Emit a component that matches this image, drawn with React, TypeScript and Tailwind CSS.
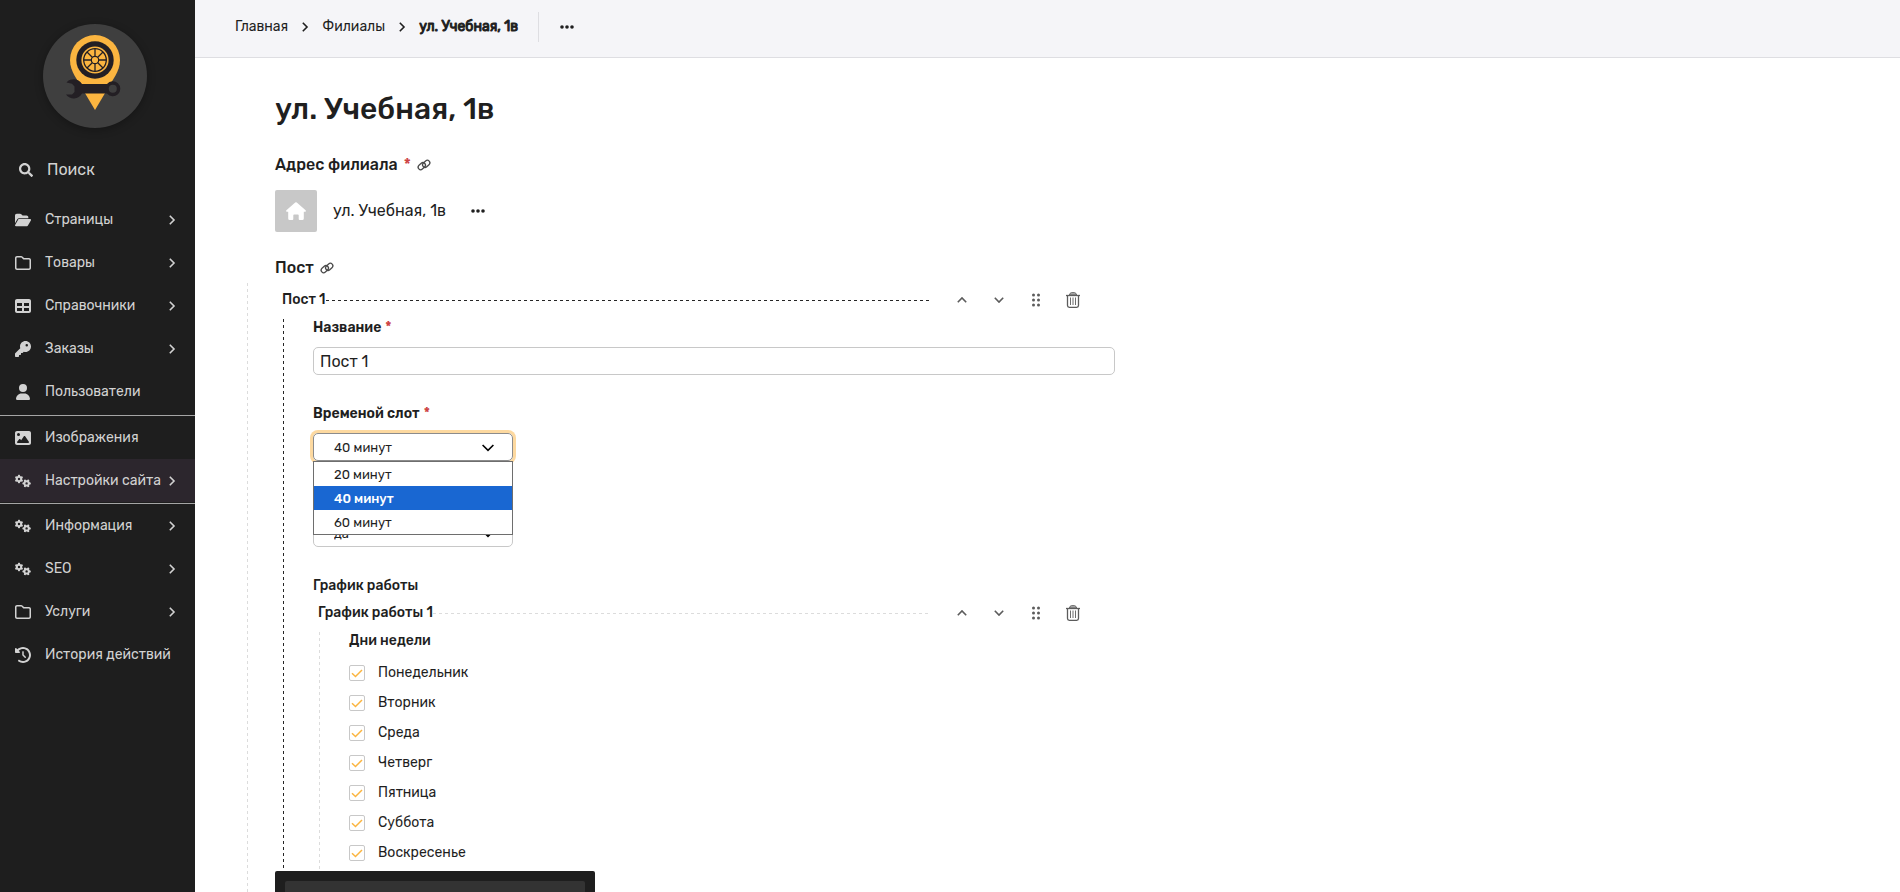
import { useState } from "react";
import type { ReactNode } from "react";
import {
  FaFolderOpen,
  FaRegFolder,
  FaTable,
  FaKey,
  FaUser,
  FaImage,
  FaGears,
  FaClockRotateLeft,
} from "react-icons/fa6";
import { FaSearch } from "react-icons/fa";

const groups = [
  [
    { label: "Страницы", icon: FaFolderOpen, arrow: true },
    { label: "Товары", icon: FaRegFolder, arrow: true },
    { label: "Справочники", icon: FaTable, arrow: true },
    { label: "Заказы", icon: FaKey, arrow: true },
    { label: "Пользователи", icon: FaUser, arrow: false },
  ],
  [
    { label: "Изображения", icon: FaImage, arrow: false },
    { label: "Настройки сайта", icon: FaGears, arrow: true, active: true },
  ],
  [
    { label: "Информация", icon: FaGears, arrow: true },
    { label: "SEO", icon: FaGears, arrow: true },
    { label: "Услуги", icon: FaRegFolder, arrow: true },
    { label: "История действий", icon: FaClockRotateLeft, arrow: false },
  ],
];

const days = [
  "Понедельник",
  "Вторник",
  "Среда",
  "Четверг",
  "Пятница",
  "Суббота",
  "Воскресенье",
];

const slots = ["20 минут", "40 минут", "60 минут"];

function Chevron({ className }: { className: string }) {
  return (
    <svg viewBox="0 0 10 10" className={className} fill="none" stroke="currentColor" strokeWidth="1.6">
      <path d="M2.8 .8 7 5 2.8 9.2" />
    </svg>
  );
}

function Logo() {
  return (
    <svg viewBox="0 0 104 104" className="size-[104px] rounded-full bg-[#3f3f3f] shadow-[0_2px_8px_rgba(0,0,0,0.3)]">
      <path d="M52 11a25 25 0 0 1 25 25c0 6-2 11-4.500 15.500L52 86 31.500 51.500C29 47 27 42 27 36a25 25 0 0 1 25-25z" fill="#fbb540" />
      <circle cx="52" cy="36" r="18.700" fill="#231f24" />
      <circle cx="52" cy="36" r="13.600" fill="#fbb540" />
      <circle cx="52" cy="36" r="11.300" fill="none" stroke="#231f24" strokeWidth="1.300" />
      <g stroke="#231f24" strokeWidth="1.300">
        <path d="M52 24.500v23M40.500 36h23M44 28l16 16M60 28 44 44" />
      </g>
      <circle cx="52" cy="36" r="3.700" fill="#fbb540" stroke="#231f24" strokeWidth="1.200" />
      <path
        d="M23.500 58.500a9.500 9.500 0 0 1 15.500 1.500H64a7.500 7.500 0 1 1 0 9.500H39A9.500 9.500 0 0 1 23 70.500h6l2.500-2.500v-5.500L29 59.800z"
        fill="#231f24"
      />
      <circle cx="69.800" cy="64.700" r="4" fill="#3f3f3f" />
    </svg>
  );
}

function Dots() {
  return (
    <svg viewBox="0 0 14 4" className="h-1 w-3.5" fill="currentColor">
      <circle cx="2" cy="2" r="1.800" />
      <circle cx="7" cy="2" r="1.800" />
      <circle cx="12" cy="2" r="1.800" />
    </svg>
  );
}

function LinkIcon() {
  return (
    <svg viewBox="0 0 14 12" className="h-3 w-3.5 text-[#4a4a4a]" fill="none" stroke="currentColor" strokeWidth="1.300">
      <rect x="-4" y="-2.500" width="8" height="5" rx="2.500" transform="translate(4.800 7.200) rotate(-42)" />
      <rect x="-4" y="-2.500" width="8" height="5" rx="2.500" transform="translate(9.200 4.800) rotate(-42)" />
    </svg>
  );
}

function Trash() {
  return (
    <svg viewBox="0 0 14 16" className="h-4 w-3.5" fill="none" stroke="currentColor">
      <path d="M0 3.500h14" strokeWidth="1.300" />
      <path d="M3.500 3c.3-1.500 1-2.300 2-2.300h3c1 0 1.700.8 2 2.300z" fill="currentColor" fillOpacity=".45" />
      <path d="M1.500 3.500v10q0 1.800 1.800 1.800h7.400q1.800 0 1.800-1.800v-10" strokeWidth="1.300" />
      <path d="M4.500 5.500v7.500M7 5.500v7.500M9.500 5.500v7.500" strokeWidth=".9" />
    </svg>
  );
}

function Label({ text, htmlFor, required }: { text: string; htmlFor?: string; required?: boolean }) {
  return (
    <label htmlFor={htmlFor} className="flex gap-1 pt-px text-sm leading-5 font-semibold">
      {text}
      {required && <span className="text-[#cd4444]">*</span>}
    </label>
  );
}

function BlockHeader({ title, dark }: { title: string; dark?: boolean }) {
  return (
    <div className="flex h-[34px] items-center pr-6">
      <h3 className="text-sm leading-5 font-medium">{title}</h3>
      <div
        className={
          dark
            ? "mr-3.5 h-px flex-1 bg-[repeating-linear-gradient(90deg,#262626_0_3px,transparent_3px_6px)]"
            : "mr-3.5 h-px flex-1 bg-[repeating-linear-gradient(90deg,#dcdcdc_0_3px,transparent_3px_6px)]"
        }
      />
      <div className="flex text-[#5c5c5c] *:flex *:h-6 *:w-[37px] *:items-center *:justify-center">
        <button type="button" aria-label="Вверх">
          <Chevron className="size-2.5 -rotate-90" />
        </button>
        <button type="button" aria-label="Вниз">
          <Chevron className="size-2.5 rotate-90" />
        </button>
        <button type="button" aria-label="Переместить">
          <svg viewBox="0 0 8 14" className="h-3.5 w-2" fill="currentColor">
            <circle cx="1.500" cy="2" r="1.500" />
            <circle cx="6.500" cy="2" r="1.500" />
            <circle cx="1.500" cy="7" r="1.500" />
            <circle cx="6.500" cy="7" r="1.500" />
            <circle cx="1.500" cy="12" r="1.500" />
            <circle cx="6.500" cy="12" r="1.500" />
          </svg>
        </button>
        <button type="button" aria-label="Удалить">
          <Trash />
        </button>
      </div>
    </div>
  );
}

function SelectArrow() {
  return (
    <svg viewBox="0 0 12 8" className="pointer-events-none absolute top-[11px] right-[19px] h-2 w-3" fill="none" stroke="#000" strokeWidth="1.600">
      <path d="M.6 1 6 6.400 11.400 1" />
    </svg>
  );
}

function Day({ name }: { name: string }) {
  const [checked, setChecked] = useState(true);
  return (
    <label className="flex h-[30px] items-center gap-[13px] text-sm">
      <span className="relative flex size-4">
        <input
          type="checkbox"
          checked={checked}
          onChange={(e) => setChecked(e.target.checked)}
          className="size-4 appearance-none rounded-xs border border-[#c8c8c8] bg-white"
        />
        {checked && (
          <svg viewBox="0 0 16 16" className="pointer-events-none absolute inset-0 size-4" fill="none" stroke="#fbb540" strokeWidth="1.500">
            <path d="M3 8.200 6.500 11.500 13 5" />
          </svg>
        )}
      </span>
      {name}
    </label>
  );
}

function Block({ children, dark }: { children: ReactNode; dark?: boolean }) {
  return (
    <div className="ml-px flex">
      <div
        className={
          dark
            ? "mt-0.5 w-px bg-[repeating-linear-gradient(180deg,#262626_0_3px,transparent_3px_6px)]"
            : "mt-0.5 w-px bg-[repeating-linear-gradient(180deg,#dcdcdc_0_3px,transparent_3px_6px)]"
        }
      />
      <div className="flex-1 pl-[29px]">{children}</div>
    </div>
  );
}

function Sidebar() {
  return (
    <aside className="w-[195px] shrink-0 bg-[#1e1e1e] text-[#d2d2d2]">
      <a href="#" aria-label="Главная" className="flex justify-center pt-6 pr-1.5">
        <Logo />
      </a>
      <button type="button" className="mt-[25px] flex h-[34px] w-full items-center gap-3.5 pl-[19px]">
        <FaSearch className="size-3.5" />
        <span className="text-base leading-6">Поиск</span>
      </button>
      <nav className="mt-[11px]">
        {groups.map((group, i) => (
          <ul key={i} className={i === 0 ? "pb-0.5" : "border-t border-[#a5a5a5] pb-px"}>
            {group.map((item) => (
              <li key={item.label}>
                <a
                  href="#"
                  className={
                    "flex h-[43px] items-center pr-4 pl-[15px] text-sm " +
                    (item.active ? "bg-[#2c262d]" : "")
                  }>
                  <item.icon className="size-4 shrink-0" />
                  <span className="ml-3.5 flex-1 whitespace-nowrap">{item.label}</span>
                  {item.arrow && <Chevron className="mr-0.5 size-2.5 shrink-0" />}
                </a>
              </li>
            ))}
          </ul>
        ))}
      </nav>
    </aside>
  );
}

export default function App() {
  const [slot, setSlot] = useState("40 минут");
  const [open, setOpen] = useState(true);

  return (
    <div className="flex h-screen overflow-hidden bg-white font-['Rubik','Inter',sans-serif] text-[#1f1f1f]">
      <Sidebar />
      <main className="relative flex-1 overflow-hidden">
        <header className="flex h-[58px] items-start border-b border-[#dedee2] bg-[#f5f5f8] pt-3 pl-10 text-sm">
          <nav className="flex h-[30px] items-center">
            <a href="#">Главная</a>
            <Chevron className="mx-3 size-2.5" />
            <a href="#">Филиалы</a>
            <Chevron className="mx-3 size-2.5" />
            <a href="#" className="[-webkit-text-stroke:1px]">
              ул. Учебная, 1в
            </a>
          </nav>
          <div className="ml-5 flex h-[30px] items-center border-l border-[#dedee2] pl-[21px]">
            <button type="button" aria-label="Действия">
              <Dots />
            </button>
          </div>
        </header>

        <form className="max-w-[920px] pt-[31px] pl-20" onSubmit={(e) => e.preventDefault()}>
          <h1 className="text-3xl leading-10 font-medium">ул. Учебная, 1в</h1>

          <section className="mt-6">
            <h2 className="flex h-6 items-center gap-1.5 text-base font-medium">
              Адрес филиала
              <span className="text-[#cd4444]">*</span>
              <LinkIcon />
            </h2>
            <div className="mt-[13px] flex items-center">
              <div className="flex size-[42px] items-center justify-center rounded-xs bg-[#c8c8c8]">
                <svg viewBox="0 0 20 18" className="h-[18px] w-5" fill="#fff">
                  <path d="M9.200.5q.8-.7 1.600 0L19.600 8.300q.8 1-.4 1.500h-1.400v6.700q0 1.500-1.500 1.500h-2.600q-1 0-1-1v-3.700q0-.8-.8-.8H8.100q-.8 0-.8.8V17q0 1-1 1H3.700q-1.500 0-1.500-1.500V9.800H.8Q-.4 9.300.4 8.300z" />
                </svg>
              </div>
              <span className="ml-4 text-base">ул. Учебная, 1в</span>
              <button type="button" aria-label="Действия" className="ml-[25px]">
                <Dots />
              </button>
            </div>
          </section>

          <section className="mt-6">
            <h2 className="flex h-6 items-center gap-1.5 text-base font-medium">
              Пост
              <LinkIcon />
            </h2>
            <div className="mt-[3px] -ml-7 flex">
              <div className="w-px bg-[repeating-linear-gradient(180deg,#dcdcdc_0_3px,transparent_3px_6px)]" />
              <div className="flex-1 pl-[34px]">
                <BlockHeader title="Пост 1" dark />
                <Block dark>
                  <Label text="Название" htmlFor="name" required />
                  <input
                    id="name"
                    defaultValue="Пост 1"
                    className="mt-[9px] block h-7 w-full rounded-[5px] border border-[#c8c8c8] px-1.5 text-base"
                  />

                  <div className="mt-7">
                    <Label text="Временой слот" htmlFor="slot" required />
                    <div className="relative mt-[9px] w-[200px]">
                      <select
                        id="slot"
                        value={slot}
                        onChange={(e) => setSlot(e.target.value)}
                        className="block h-7 w-full appearance-none rounded-[5px] border border-[#8c8c8c] pt-0.5 pl-5 text-[13px] ring-3 ring-[#fdd9a0]">
                        {slots.map((s) => (
                          <option key={s}>{s}</option>
                        ))}
                      </select>
                      <SelectArrow />
                      {open && (
                        <ul className="absolute top-7 left-0 z-10 w-full border border-[#6e6e6e] bg-white text-[13px] leading-[22px]">
                          {slots.map((s) => (
                            <li key={s}>
                              <button
                                type="button"
                                onClick={() => {
                                  setSlot(s);
                                  setOpen(false);
                                }}
                                className={
                                  "block w-full pt-0.5 pl-5 text-left " +
                                  (s === slot ? "bg-[#1967d2] font-medium text-white" : "")
                                }>
                                {s}
                              </button>
                            </li>
                          ))}
                        </ul>
                      )}
                    </div>
                  </div>

                  <div className="relative mt-[58px] w-[200px]">
                    <select
                      aria-label="Активен"
                      className="block h-7 w-full appearance-none rounded-[5px] border border-[#c8c8c8] pt-0.5 pl-5 text-[13px]">
                      <option>да</option>
                      <option>нет</option>
                    </select>
                    <SelectArrow />
                  </div>

                  <h3 className="mt-[29px] text-sm leading-5 font-medium">График работы</h3>
                  <div className="pl-[5px]">
                    <BlockHeader title="График работы 1" />
                    <Block>
                      <fieldset>
                        <legend className="pt-px text-sm leading-5 font-medium">Дни недели</legend>
                        <div className="mt-[7px] pb-10">
                          {days.map((d) => (
                            <Day key={d} name={d} />
                          ))}
                        </div>
                      </fieldset>
                    </Block>
                  </div>
                </Block>
              </div>
            </div>
          </section>
        </form>

        <footer className="absolute bottom-0 left-20 w-80 rounded-t-xs bg-[#1e1e1e] px-2.5 pt-2.5">
          <div className="h-[11px] rounded-t-xs bg-[#333]" />
        </footer>
      </main>
    </div>
  );
}
